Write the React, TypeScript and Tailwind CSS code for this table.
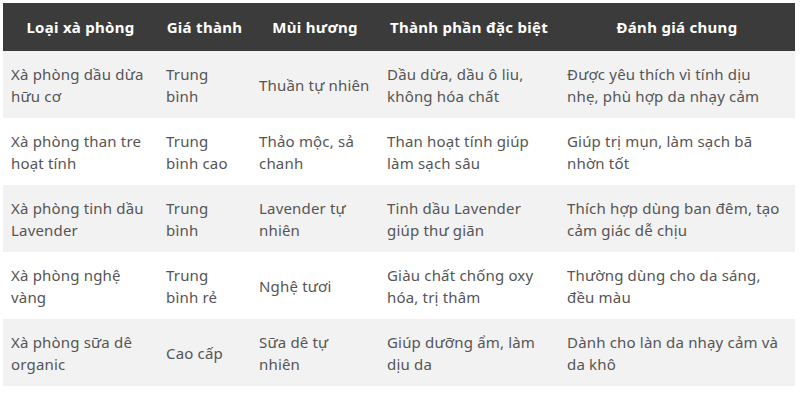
const headers = ["Loại xà phòng", "Giá thành", "Mùi hương", "Thành phần đặc biệt", "Đánh giá chung"];

// "\n" marks a line break the reference wraps at
const rows: string[][] = [
  ["Xà phòng dầu dừa hữu cơ", "Trung bình", "Thuần tự nhiên", "Dầu dừa, dầu ô liu, không hóa chất", "Được yêu thích vì tính dịu\nnhẹ, phù hợp da nhạy cảm"],
  ["Xà phòng than tre hoạt tính", "Trung bình cao", "Thảo mộc, sả chanh", "Than hoạt tính giúp làm sạch sâu", "Giúp trị mụn, làm sạch bã nhờn tốt"],
  ["Xà phòng tinh dầu Lavender", "Trung bình", "Lavender tự nhiên", "Tinh dầu Lavender giúp thư giãn", "Thích hợp dùng ban đêm, tạo cảm giác dễ chịu"],
  ["Xà phòng nghệ vàng", "Trung bình rẻ", "Nghệ tươi", "Giàu chất chống oxy hóa, trị thâm", "Thường dùng cho da sáng, đều màu"],
  ["Xà phòng sữa dê organic", "Cao cấp", "Sữa dê tự nhiên", "Giúp dưỡng ẩm, làm dịu da", "Dành cho làn da nhạy cảm và da khô"],
];

const widths = ["w-[155px]", "w-[93px]", "w-[128px]", "w-[180px]", "w-[236px]"];

export default function App() {
  return (
    <div className="h-[400px] w-[800px] bg-white pl-[3px] pt-[3px] font-['Noto_Sans',sans-serif]">
      <table className="w-[792px] table-fixed border-collapse">
        <colgroup>
          {widths.map((w, i) => (
            <col key={i} className={w} />
          ))}
        </colgroup>
        <thead>
          <tr className="h-[48px] bg-[#3b3b3b]">
            {headers.map((h) => (
              <th key={h} className="px-2 text-center text-[15px] font-bold tracking-[0.02em] text-white">
                {h}
              </th>
            ))}
          </tr>
        </thead>
        <tbody>
          {rows.map((r, i) => (
            <tr key={i} className={i % 2 === 0 ? "h-[67px] bg-[#f2f2f2]" : "h-[67px] bg-white"}>
              {r.map((c, j) => (
                <td key={j} className="whitespace-pre-line px-[8px] align-middle text-[15px] leading-[22px] tracking-[0.012em] text-[#555555]">
                  {c}
                </td>
              ))}
            </tr>
          ))}
        </tbody>
      </table>
    </div>
  );
}
